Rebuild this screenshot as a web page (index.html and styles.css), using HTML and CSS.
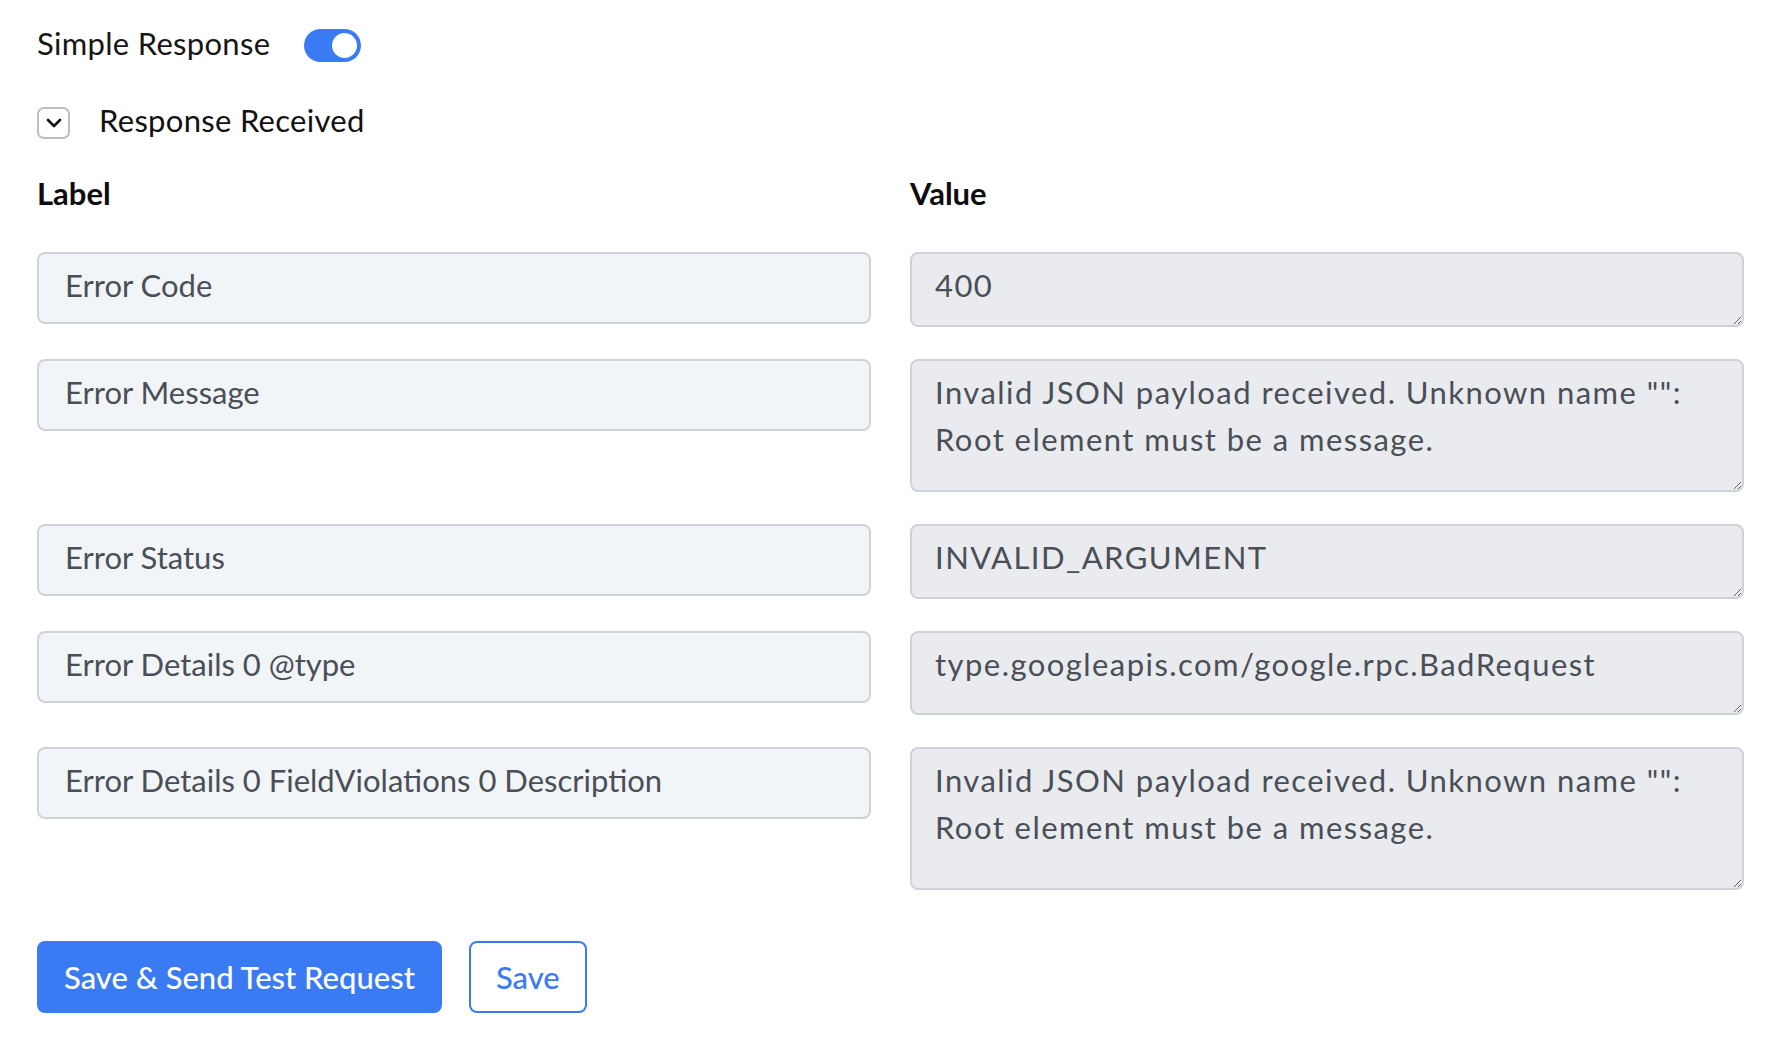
FILE: index.html
```html
<!DOCTYPE html>
<html lang="en">
<head>
<meta charset="utf-8">
<title>Response Received</title>
<link rel="stylesheet" href="styles.css">
</head>
<body>
<div class="page">
  <div class="toggle-row">
    <span class="toggle-label">Simple Response</span>
    <span class="switch"><span class="knob"></span></span>
  </div>

  <div class="collapse-row">
    <span class="chevron-box">
      <svg width="16" height="10" viewBox="0 0 16 10" aria-hidden="true"><polyline points="2,2 8,8 14,2" fill="none" stroke="#111" stroke-width="2.6" stroke-linecap="round" stroke-linejoin="round"/></svg>
    </span>
    <span class="collapse-title">Response Received</span>
  </div>

  <div class="grid">
    <div class="col-head">Label</div>
    <div class="col-head">Value</div>

    <input class="field" type="text" value="Error Code" readonly>
    <textarea class="value h1" readonly>400</textarea>

    <input class="field" type="text" value="Error Message" readonly>
    <textarea class="value h2" readonly>Invalid JSON payload received. Unknown name "": Root element must be a message.</textarea>

    <input class="field" type="text" value="Error Status" readonly>
    <textarea class="value h1" readonly>INVALID_ARGUMENT</textarea>

    <input class="field" type="text" value="Error Details 0 @type" readonly>
    <textarea class="value h1b" readonly>type.googleapis.com/google.rpc.BadRequest</textarea>

    <input class="field" type="text" value="Error Details 0 FieldViolations 0 Description" readonly>
    <textarea class="value h2b" readonly>Invalid JSON payload received. Unknown name "": Root element must be a message.</textarea>
  </div>

  <div class="actions">
    <button class="btn btn-primary" type="button">Save &amp; Send Test Request</button>
    <button class="btn btn-outline" type="button">Save</button>
  </div>
</div>
</body>
</html>
```

FILE: styles.css
```css
* { box-sizing: border-box; }

html, body {
  margin: 0;
  padding: 0;
  background: #ffffff;
}

body {
  font-family: "Lato", "Noto Sans", "Liberation Sans", sans-serif;
  font-size: 31px;
  line-height: 38px;
  color: #111111;
}

.page {
  padding: 24px 44px 0 37px;
}

.toggle-row {
  display: flex;
  align-items: flex-start;
  gap: 34px;
}

.toggle-label {
  color: #161616;
  letter-spacing: 0.3px;
}

.switch {
  position: relative;
  width: 57px;
  height: 33px;
  margin-top: 5px;
  border-radius: 17px;
  background: #3a7bf4;
  flex: none;
}

.knob {
  position: absolute;
  top: 4px;
  right: 4px;
  width: 25px;
  height: 25px;
  border-radius: 50%;
  background: #ffffff;
}

.collapse-row {
  display: flex;
  align-items: flex-start;
  gap: 29px;
  margin-top: 39px;
}

.chevron-box {
  width: 33px;
  height: 32px;
  margin-top: 6px;
  border: 2px solid #b9bfc9;
  border-radius: 7px;
  display: flex;
  align-items: center;
  justify-content: center;
  flex: none;
}

.chevron-box svg { display: block; }

.collapse-title {
  color: #111111;
  letter-spacing: 0.3px;
}

.grid {
  display: grid;
  grid-template-columns: 1fr 1fr;
  column-gap: 39px;
  row-gap: 32px;
  align-items: start;
  margin-top: 35px;
}

.col-head {
  font-weight: 700;
  color: #0d0d0d;
  margin-bottom: 8px;
}

.field,
.value {
  display: block;
  width: 100%;
  margin: 0;
  font-family: inherit;
  font-size: 31px;
  color: #4a4f57;
  border: 2px solid #cfd3d9;
  border-radius: 8px;
  outline: none;
}

.field {
  height: 72px;
  line-height: 38px;
  padding: 12px 20px 18px 26px;
  background: #f2f5f8;
}

.value {
  line-height: 47px;
  padding: 8px 20px 8px 23px;
  background: #e9ebef;
  letter-spacing: 1.45px;
  resize: vertical;
  overflow: hidden;
}

.h1 { height: 75px; }
.h1b { height: 84px; }
.h2 { height: 133px; }
.h2b { height: 143px; }

.actions {
  display: flex;
  gap: 27px;
  margin-top: 51px;
}

.btn {
  height: 72px;
  padding: 0 25px;
  border-radius: 8px;
  font-family: inherit;
  font-size: 31px;
  font-weight: 500;
  cursor: pointer;
}

.btn-primary {
  background: #3a7bf4;
  border: 2px solid #3a7bf4;
  color: #ffffff;
}

.btn-outline {
  background: #ffffff;
  border: 2px solid #3a7bf4;
  color: #3a7bf4;
}
```
